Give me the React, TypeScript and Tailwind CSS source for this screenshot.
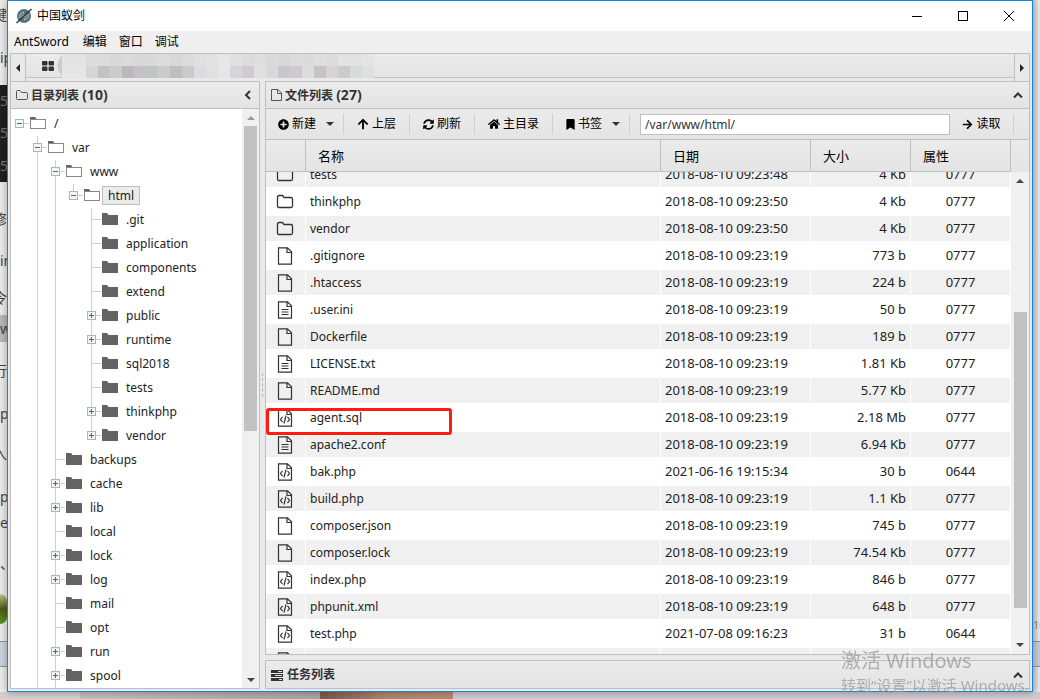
import { useLayoutEffect, useRef } from "react";
import { FaArrowRight, FaArrowUp, FaBookmark, FaHome, FaPlusCircle, FaSyncAlt } from "react-icons/fa";

type Node = { name: string; guides: string; mark: "open" | "plus" | "none"; last?: boolean; selected?: boolean };

// guides: one char per ancestor level, "|" keeps the vertical line going
const tree: Node[] = [
  { name: "/", guides: "", mark: "open" },
  { name: "var", guides: " ", mark: "open" },
  { name: "www", guides: " |", mark: "open" },
  { name: "html", guides: " ||", mark: "open", last: true, selected: true },
  { name: ".git", guides: " || ", mark: "none" },
  { name: "application", guides: " || ", mark: "none" },
  { name: "components", guides: " || ", mark: "none" },
  { name: "extend", guides: " || ", mark: "none" },
  { name: "public", guides: " || ", mark: "plus" },
  { name: "runtime", guides: " || ", mark: "plus" },
  { name: "sql2018", guides: " || ", mark: "none" },
  { name: "tests", guides: " || ", mark: "none" },
  { name: "thinkphp", guides: " || ", mark: "plus" },
  { name: "vendor", guides: " || ", mark: "plus", last: true },
  { name: "backups", guides: " |", mark: "none" },
  { name: "cache", guides: " |", mark: "plus" },
  { name: "lib", guides: " |", mark: "plus" },
  { name: "local", guides: " |", mark: "none" },
  { name: "lock", guides: " |", mark: "plus" },
  { name: "log", guides: " |", mark: "plus" },
  { name: "mail", guides: " |", mark: "none" },
  { name: "opt", guides: " |", mark: "none" },
  { name: "run", guides: " |", mark: "plus" },
  { name: "spool", guides: " |", mark: "plus" },
];

const files = [
  { type: "folder", name: "tests", date: "2018-08-10 09:23:48", size: "4 Kb", mode: "0777" },
  { type: "folder", name: "thinkphp", date: "2018-08-10 09:23:50", size: "4 Kb", mode: "0777" },
  { type: "folder", name: "vendor", date: "2018-08-10 09:23:50", size: "4 Kb", mode: "0777" },
  { type: "file", name: ".gitignore", date: "2018-08-10 09:23:19", size: "773 b", mode: "0777" },
  { type: "file", name: ".htaccess", date: "2018-08-10 09:23:19", size: "224 b", mode: "0777" },
  { type: "text", name: ".user.ini", date: "2018-08-10 09:23:19", size: "50 b", mode: "0777" },
  { type: "file", name: "Dockerfile", date: "2018-08-10 09:23:19", size: "189 b", mode: "0777" },
  { type: "text", name: "LICENSE.txt", date: "2018-08-10 09:23:19", size: "1.81 Kb", mode: "0777" },
  { type: "file", name: "README.md", date: "2018-08-10 09:23:19", size: "5.77 Kb", mode: "0777" },
  { type: "code", name: "agent.sql", date: "2018-08-10 09:23:19", size: "2.18 Mb", mode: "0777", boxed: true },
  { type: "text", name: "apache2.conf", date: "2018-08-10 09:23:19", size: "6.94 Kb", mode: "0777" },
  { type: "code", name: "bak.php", date: "2021-06-16 19:15:34", size: "30 b", mode: "0644" },
  { type: "code", name: "build.php", date: "2018-08-10 09:23:19", size: "1.1 Kb", mode: "0777" },
  { type: "file", name: "composer.json", date: "2018-08-10 09:23:19", size: "745 b", mode: "0777" },
  { type: "file", name: "composer.lock", date: "2018-08-10 09:23:19", size: "74.54 Kb", mode: "0777" },
  { type: "code", name: "index.php", date: "2018-08-10 09:23:19", size: "846 b", mode: "0777" },
  { type: "code", name: "phpunit.xml", date: "2018-08-10 09:23:19", size: "648 b", mode: "0777" },
  { type: "code", name: "test.php", date: "2021-07-08 09:16:23", size: "31 b", mode: "0644" },
  { type: "file", name: "", date: "", size: "", mode: "" },
];

const behind = [
  { text: "键", cls: "h-[30px] justify-end" },
  { text: "ip", cls: "h-[55px]" },
  { text: "5", cls: "h-[32px] bg-[#1f2022] text-[#777]" },
  { text: "5", cls: "h-[32px] bg-[#1f2022] text-[#777]" },
  { text: "5", cls: "h-[33px] bg-[#1f2022] text-[#777]" },
  { text: "", cls: "h-[16px]" },
  { text: "修", cls: "h-[42px] justify-end" },
  { text: "in", cls: "h-[41px]" },
  { text: "令", cls: "h-[34px] justify-end" },
  { text: "w", cls: "h-[27px] bg-[#b9b9b9]" },
  { text: "行", cls: "h-[58px] justify-end" },
  { text: "p", cls: "h-[27px]" },
  { text: "入", cls: "h-[54px] justify-end" },
  { text: "p", cls: "h-[32px]" },
  { text: "e", cls: "h-[20px]" },
  { text: "、", cls: "h-[61px]" },
  { text: "", cls: "h-[30px] rounded-r-full bg-gradient-to-b from-[#c9c489] via-[#4c5a17] to-[#4c9a1c]" },
  { text: "", cls: "h-[17px]" },
  { text: "", cls: "h-[26px] border-y border-[#8f949e] bg-[#ced3df]" },
];

const mosaic = [
  ["#e4e4e4", "#e4e4e4", "#dedcda", "#dcdcdc", "#d8d8d8", "#dcdadc", "#d8d8d8", "#d8dada", "#dcdcda", "#d8d8d8", "#dadcdc", "#e0e0e0", "#e2e2e2", "#e6e6e6", "#e0e0e0", "#dcdcdc", "#dedede", "#dadada", "#d8d8d8", "#dcdcdc", "#dadadc", "#dedede", "#dcdcdc", "#e2e2e2", "#e2e2e2", "#e4e4e4"],
  ["#e6e6e6", "#e6e6e6", "#d8d6d3", "#c2c2c4", "#cccccc", "#bcb8bb", "#c4c2c5", "#c0c4c6", "#cccbc8", "#bcbfbe", "#c9cac9", "#dcdcde", "#e0e0e0", "#e6e6e6", "#d6d6d8", "#cfcccf", "#e2e0de", "#d6d8da", "#cac6c9", "#cccacc", "#dcdcdc", "#c4c4c4", "#d6d4d0", "#cbcbce", "#d8dada", "#e0e0e0"],
];

function Guide({ line }: { line: boolean }) {
  return (
    <svg className="h-6 w-[18px] shrink-0" viewBox="0 0 18 24">
      {line && <path d="M8.5 0V24" stroke="#cfcfcf" />}
    </svg>
  );
}

function Toggle({ node }: { node: Node }) {
  const root = node.guides === "";
  return (
    <svg className="h-6 w-[18px] shrink-0" viewBox="0 0 18 24" fill="none">
      {!root && <path d={node.last ? "M8.5 0V12" : "M8.5 0V24"} stroke="#cfcfcf" />}
      <path d="M9 11.5H18" stroke="#cfcfcf" />
      {node.mark !== "none" && (
        <>
          <rect x="4.5" y="7.5" width="8" height="8" fill="#f2f6f7" stroke="#a9b7bd" />
          <path d={node.mark === "plus" ? "M6 11.5H11M8.5 9V14" : "M6 11.5H11"} stroke="#4d6b78" />
        </>
      )}
    </svg>
  );
}

function TreeFolder({ open }: { open: boolean }) {
  return (
    <svg className="h-6 w-[19px] shrink-0" viewBox="0 0 19 24" fill="none">
      {open ? (
        <>
          <path d="M1 5H6L7.5 7H17V9H1Z" fill="#666" />
          <rect x="1.5" y="7.5" width="15" height="9" fill="#fff" stroke="#888" />
        </>
      ) : (
        <path d="M1 5H6L7.5 7H17V17H1Z" fill="#636363" />
      )}
    </svg>
  );
}

function FileIcon({ type }: { type: string }) {
  if (type === "folder") {
    return (
      <svg className="mx-auto h-[18px] w-[18px]" viewBox="0 0 18 18" fill="none" stroke="#333" strokeWidth="1.3">
        <path d="M1.5 4Q1.5 2.500 3 2.500H6.5L8 4.500H15Q16.5 4.500 16.5 6V13Q16.5 14.500 15 14.500H3Q1.500 14.500 1.500 13Z" />
      </svg>
    );
  }
  return (
    <svg className="mx-auto h-[18px] w-[18px]" viewBox="0 0 18 18" fill="none" stroke="#333" strokeWidth="1.2">
      <path d="M2.500 .8H11.500L15.500 4.800V17.200H2.500ZM11 1V5.500H15.500" />
      {type === "text" && <path d="M5.500 8.500H12.500M5.500 11H12.500M5.500 13.500H12.500" />}
      {type === "code" && <path d="M6.500 7.800L4.500 10.500L6.500 13.200M11.500 7.800L13.500 10.500L11.500 13.200M10 6.500L8 14.500" />}
    </svg>
  );
}

function Arrow({ dir, color = "#444" }: { dir: "up" | "down" | "left" | "right"; color?: string }) {
  const paths = { up: "M0 6L4 2L8 6Z", down: "M0 2L4 6L8 2Z", left: "M6 0L2 4L6 8Z", right: "M2 0L6 4L2 8Z" };
  return (
    <svg className="h-2 w-2 shrink-0" viewBox="0 0 8 8">
      <path d={paths[dir]} fill={color} />
    </svg>
  );
}

function Chevron({ dir }: { dir: "up" | "left" }) {
  return (
    <svg className="h-[10px] w-[10px]" viewBox="0 0 10 10" fill="none" stroke="#333" strokeWidth="2">
      <path d={dir === "up" ? "M1 7.500L5 3.500L9 7.500" : "M7 1L3 5L7 9"} />
    </svg>
  );
}

function Sep() {
  return <span className="h-5 w-px shrink-0 bg-[#c2d3dc]" />;
}

function Mosaic() {
  return (
    <svg className="h-6 w-[322px]" viewBox="-6 0 322 24">
      {mosaic.map((row, y) =>
        row.map((c, x) => <rect key={`${x}-${y}`} x={x * 12} y={y * 12} width="12" height="12" fill={c} />)
      )}
      <path d="M0 1Q-9 12 0 22Z" fill="#c8ccd0" />
    </svg>
  );
}

function FileTable() {
  const box = useRef<HTMLDivElement>(null);
  useLayoutEffect(() => {
    if (box.current) box.current.scrollTop = 11;
  }, []);
  const th = "h-8 border-r border-b border-[#bfbfbf] bg-gradient-to-b from-[#ebebeb] to-[#e4e4e4] pl-3 text-left font-normal";
  return (
    <div className="flex min-h-0 flex-1 bg-white">
      <div ref={box} className="min-w-0 flex-1 overflow-auto [scrollbar-width:none]">
        <table className="w-full table-fixed border-separate border-spacing-0 text-[13px] leading-4 text-[#222]">
          <thead className="sticky top-0 z-20 text-black">
            <tr>
              <th className={`${th} w-10`} aria-label="类型"></th>
              <th className={th}>名称</th>
              <th className={`${th} w-[150px]`}>日期</th>
              <th className={`${th} w-[100px]`}>大小</th>
              <th className={`${th} w-[100px]`}>属性</th>
            </tr>
          </thead>
          <tbody className="[&_td]:h-[27px] [&_td]:border-y [&_td]:border-r [&_td]:border-white">
            {files.map((f, i) => (
              <tr key={i} className={i % 2 === 0 ? "bg-[#f0f0f0]" : "bg-white"}>
                <td className="relative pr-px">
                  <FileIcon type={f.type} />
                  {f.boxed && (
                    <span className="absolute top-[3px] left-0 z-10 h-[27px] w-[186px] rounded-[3px] border-3 border-[#fb1c12]" />
                  )}
                </td>
                <td className="pl-1 text-xs">{f.name}</td>
                <td className="pb-[2px] pl-1">{f.date}</td>
                <td className="pr-1 pb-[2px] text-right">{f.size}</td>
                <td className="pb-[2px] text-center">{f.mode}</td>
              </tr>
            ))}
          </tbody>
        </table>
      </div>
      <div className="flex w-[18px] flex-col items-center bg-[#f0f0f0]">
        <div className="h-8 w-full bg-gradient-to-b from-[#ebebeb] to-[#e4e4e4]" />
        <div className="flex h-[18px] items-center"><Arrow dir="up" /></div>
        <div className="flex min-h-0 w-[13px] flex-1 flex-col">
          <div className="flex-[122]" />
          <div className="flex-[296] bg-[#c1c1c1]" />
          <div className="flex-[28]" />
        </div>
        <div className="flex h-[18px] items-center"><Arrow dir="down" /></div>
      </div>
    </div>
  );
}

export default function App() {
  const bar = "flex h-[27px] shrink-0 items-center border-b border-[#bfbfbf] bg-gradient-to-b from-[#ebebeb] to-[#e4e4e4] text-xs font-bold text-[#333]";
  return (
    <div className="flex h-screen flex-col overflow-hidden bg-[#e3e3e3] font-['Noto_Sans','Noto_Sans_CJK_SC',sans-serif] text-xs text-black">
      <div className="flex min-h-0 flex-1">
        <div className="flex w-[7px] shrink-0 flex-col overflow-hidden bg-[#ececec] text-sm text-[#444]">
          {behind.map((b, i) => (
            <span key={i} className={`flex shrink-0 items-center whitespace-nowrap ${b.cls}`}>{b.text}</span>
          ))}
        </div>

        {/* Window */}
        <div className="relative flex min-w-0 flex-1 flex-col border border-[#1883d7] bg-[#efefef] shadow-[0_0_8px_rgba(0,0,0,0.35)]">
          <header className="flex h-[30px] shrink-0 items-center bg-white pl-2">
            <svg className="h-4 w-4" viewBox="0 0 16 16" fill="none">
              <circle cx="8" cy="8" r="7" fill="#56717f" />
              <path d="M4 10C3 7 5 4.500 8 4.500M12 6C13 9 11 11.500 8 11.500M6 9.500C6 7.500 7 6.500 8.500 6.500M10 6.500C10 8.500 9 9.500 7.500 9.500" stroke="#c3d0d6" />
              <path d="M0.500 15L15.500 1" stroke="#263238" strokeWidth="1.300" />
            </svg>
            <h1 className="ml-[5px] flex-1">中国蚁剑</h1>
            <button aria-label="最小化" className="flex w-[46px] justify-center">
              <svg className="h-3 w-3" viewBox="0 0 12 12"><path d="M1 6.500H11" stroke="#000" /></svg>
            </button>
            <button aria-label="最大化" className="flex w-[46px] justify-center">
              <svg className="h-3 w-3" viewBox="0 0 12 12"><rect x="1.500" y="1.500" width="9" height="9" fill="none" stroke="#000" /></svg>
            </button>
            <button aria-label="关闭" className="flex w-[46px] justify-center">
              <svg className="h-3 w-3" viewBox="0 0 12 12"><path d="M1 1L11 11M11 1L1 11" stroke="#000" /></svg>
            </button>
          </header>
          <nav className="flex h-[22px] shrink-0 items-center gap-3 pl-[6px]">
            <button className="pr-[2px]">AntSword</button>
            <button>编辑</button>
            <button>窗口</button>
            <button>调试</button>
          </nav>

          <div className="flex min-h-0 flex-1 flex-col bg-[#e9e9e9] px-[2px] pb-[2px]">
            {/* Tabs */}
            <div className="flex h-7 shrink-0 border border-b-0 border-[#bfbfbf]">
              <button aria-label="向左" className="flex w-[15px] items-center justify-center border-r border-[#bfbfbf]"><Arrow dir="left" color="#222" /></button>
              <div className="flex h-6 min-w-0 flex-1 items-center border-b border-[#c4c4c4] bg-gradient-to-b from-[#ebebeb] to-[#e4e4e4] pl-4">
                <svg className="h-[10px] w-3 shrink-0" viewBox="0 0 12 10" fill="#333">
                  <rect width="5.500" height="4.500" rx="1" />
                  <rect x="6.500" width="5.500" height="4.500" rx="1" />
                  <rect y="5.500" width="5.500" height="4.500" rx="1" />
                  <rect x="6.500" y="5.500" width="5.500" height="4.500" rx="1" />
                </svg>
                <div className="ml-[2px]"><Mosaic /></div>
              </div>
              <button aria-label="向右" className="flex w-[15px] items-center justify-center border-l border-[#bfbfbf]"><Arrow dir="right" color="#222" /></button>
            </div>

            <div className="flex min-h-0 flex-1">
              {/* Directory tree */}
              <section className="flex w-[250px] shrink-0 flex-col border border-[#bfbfbf] bg-white">
                <h2 className={`${bar} pl-[5px] pr-[6px]`}>
                  <svg className="h-3 w-3" viewBox="0 0 12 12" fill="none" stroke="#555">
                    <path d="M.5 2.500Q.5 1.500 1.500 1.500H4L5.500 3.500H10.500Q11.500 3.500 11.500 4.500V9.500Q11.500 10.500 10.500 10.500H1.500Q.5 10.500 .5 9.500Z" />
                  </svg>
                  <span className="ml-[3px] flex-1">目录列表 <span className="text-sm leading-4">(10)</span></span>
                  <button aria-label="收起"><Chevron dir="left" /></button>
                </h2>
                <div className="flex min-h-0 flex-1">
                  <ul className="min-w-0 flex-1 overflow-hidden pt-[3px]">
                    {tree.map((n) => (
                      <li key={n.guides + n.name} className="flex h-6 items-center">
                        {n.guides.split("").map((g, i) => (
                          <Guide key={i} line={g === "|"} />
                        ))}
                        <Toggle node={n} />
                        <TreeFolder open={n.mark === "open"} />
                        <button className={n.selected ? "mb-px h-[19px] border border-[#bfbfbf] bg-[#ebebeb] px-[5px] leading-[17px] text-[#222]" : "border border-transparent px-[5px] text-[#222]"}>
                          {n.name}
                        </button>
                      </li>
                    ))}
                  </ul>
                  <div className="flex w-[17px] flex-col items-center bg-[#f0f0f0]">
                    <div className="flex h-[17px] items-center"><Arrow dir="up" color="#999" /></div>
                    <div className="flex min-h-0 w-[13px] flex-1 flex-col">
                      <div className="flex-[305] bg-[#c1c1c1]" />
                      <div className="flex-[240]" />
                    </div>
                    <div className="flex h-[17px] items-center"><Arrow dir="down" /></div>
                  </div>
                </div>
              </section>

              <div className="flex w-[5px] shrink-0 items-center justify-center">
                <span className="h-6 border-l border-dashed border-[#b5b5b5]" />
              </div>

              <div className="flex min-w-0 flex-1 flex-col gap-[5px]">
                {/* File list */}
                <section className="flex min-h-0 flex-1 flex-col border border-[#bfbfbf]">
                  <h2 className={`${bar} pl-[5px] pr-[6px]`}>
                    <svg className="h-3 w-[11px]" viewBox="0 0 11 12" fill="none" stroke="#555">
                      <path d="M.5 .5H7L10.500 4V11.500H.5ZM6.500 .5V4.500H10.500" />
                    </svg>
                    <span className="ml-[3px] flex-1">文件列表 <span className="text-sm leading-4">(27)</span></span>
                    <button aria-label="收起"><Chevron dir="up" /></button>
                  </h2>
                  <div className="flex h-[31px] shrink-0 items-center border-b border-[#bfbfbf] bg-gradient-to-b from-[#ebebeb] to-[#e4e4e4]">
                    <button className="flex w-[77px] items-center pl-3"><FaPlusCircle className="mr-[3px] h-[11px] w-[11px]" />新建<span className="ml-[10px]"><Arrow dir="down" color="#333" /></span></button>
                    <Sep />
                    <button className="flex w-[65px] items-center justify-center gap-[3px]"><FaArrowUp className="h-3 w-3" />上层</button>
                    <Sep />
                    <button className="flex w-16 items-center justify-center gap-[3px]"><FaSyncAlt className="h-[11px] w-[11px]" />刷新</button>
                    <Sep />
                    <button className="flex w-[77px] items-center justify-center gap-[3px]"><FaHome className="h-3 w-3" />主目录</button>
                    <Sep />
                    <button className="flex w-[76px] items-center pl-3"><FaBookmark className="mr-[2px] h-[11px] w-[11px]" />书签<span className="ml-[10px]"><Arrow dir="down" color="#333" /></span></button>
                    <Sep />
                    <input aria-label="路径" defaultValue="/var/www/html/" className="ml-[10px] h-[21px] min-w-0 flex-1 border border-[#bfbfbf] bg-white px-1 text-[#333]" />
                    <button className="flex w-[63px] items-center justify-center gap-[3px]"><FaArrowRight className="h-[11px] w-[11px]" />读取</button>
                    <Sep />
                    <span className="w-[15px]" />
                  </div>
                  <FileTable />
                </section>

                {/* Tasks */}
                <section className="shrink-0 border border-[#bfbfbf]">
                  <h2 className={`${bar} border-b-0 pl-[5px] pr-[6px]`}>
                    <svg className="h-3 w-3" viewBox="0 0 12 12" fill="#333">
                      <path d="M0 1H12V4H0ZM0 5H12V8H0ZM0 9H12V12H0Z" />
                      <path d="M7 2H11V3H7ZM4 6H11V7H4ZM8 10H11V11H8Z" fill="#ddd" />
                    </svg>
                    <span className="ml-1 flex-1">任务列表</span>
                    <button aria-label="展开"><Chevron dir="up" /></button>
                  </h2>
                </section>
              </div>
            </div>
          </div>
        </div>

        <div className="flex w-[7px] shrink-0 flex-col justify-end overflow-hidden bg-gradient-to-r from-[#cfcfcf] to-[#ececec] text-[11px] text-[#888]">
          <span>10</span>
          <span className="mt-2 h-[26px] border-y border-[#8f949e] bg-[#c5cbd8]" />
          <span className="h-[25px]" />
        </div>
      </div>
      <div className="flex h-[7px] shrink-0">
        <div className="w-[80px] bg-[#d3d1cf]" />
        <div className="w-[240px] bg-gradient-to-r from-[#c4bfba] to-[#a9a6a3]" />
        <div className="w-[133px] bg-gradient-to-r from-[#7d5a48] via-[#b1866c] to-[#b98b70]" />
        <div className="flex-1 bg-[#cbcbd0]" />
      </div>

      {/* Activation notice */}
      <div className="pointer-events-none absolute right-1 bottom-1 z-30 w-[195px] whitespace-nowrap text-[#9a9a9a]/75">
        <p className="text-xl leading-7">激活 Windows</p>
        <p className="text-[15px] leading-5">转到“设置”以激活 Windows。</p>
      </div>
    </div>
  );
}
